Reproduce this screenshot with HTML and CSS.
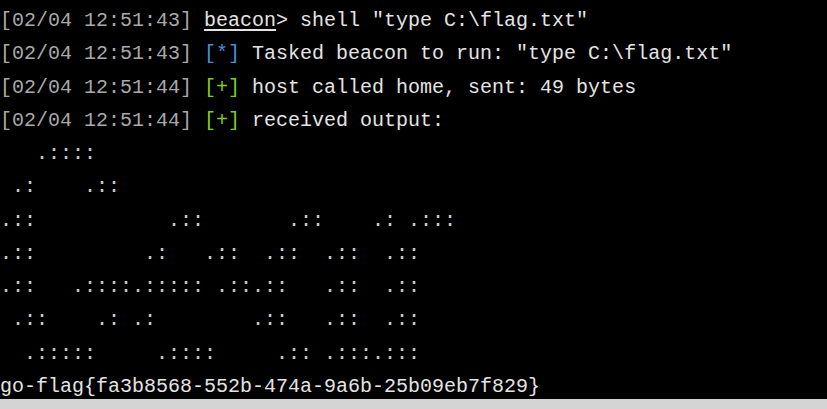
FILE: index.html
```html
<!DOCTYPE html>
<html>
<head>
<meta charset="utf-8">
<link rel="stylesheet" href="styles.css">
</head>
<body>
<div class="screen">
<pre class="term"><span class="ts">[02/04 12:51:43]</span> <span class="prompt">beacon</span>&gt; shell "type C:\flag.txt"
<span class="ts">[02/04 12:51:43]</span> <span class="info">[*]</span> Tasked beacon to run: "type C:\flag.txt"
<span class="ts">[02/04 12:51:44]</span> <span class="ok">[+]</span> host called home, sent: 49 bytes
<span class="ts">[02/04 12:51:44]</span> <span class="ok">[+]</span> received output:
<span class="art">   .::::
 .:    .::
.::           .::       .::    .: .:::
.::         .:   .::  .::  .::  .::
.::   .::::.::::: .::.::   .::  .::
 .::    .: .:        .::   .::  .::
  .:::::     .::::     .:: .:::.:::</span>
go-flag{fa3b8568-552b-474a-9a6b-25b09eb7f829}</pre>
<div class="statusbar"></div>
</div>
</body>
</html>
```

FILE: styles.css
```css
html, body {
  margin: 0;
  padding: 0;
  background: #000;
}
.screen {
  width: 827px;
  height: 409px;
  display: flex;
  flex-direction: column;
  overflow: hidden;
}
.term {
  flex: 0 0 399px;
  height: 399px;
  margin: 0;
  padding: 4px 0 0 0;
  box-sizing: border-box;
  overflow: hidden;
  background: #000;
  color: #e4e4e4;
  font-family: "Liberation Mono", monospace;
  font-size: 20px;
  line-height: 33.25px;
  white-space: pre;
}
.ts {
  color: #a9a9a9;
}
.prompt {
  text-decoration: underline;
  text-underline-offset: 3px;
  text-decoration-thickness: 2px;
}
.info {
  color: #4a8fd6;
}
.ok {
  color: #7ccf22;
}
.art {
  color: #cfcfcf;
}
.statusbar {
  flex: 0 0 10px;
  background: #d4d4d4;
}
```
